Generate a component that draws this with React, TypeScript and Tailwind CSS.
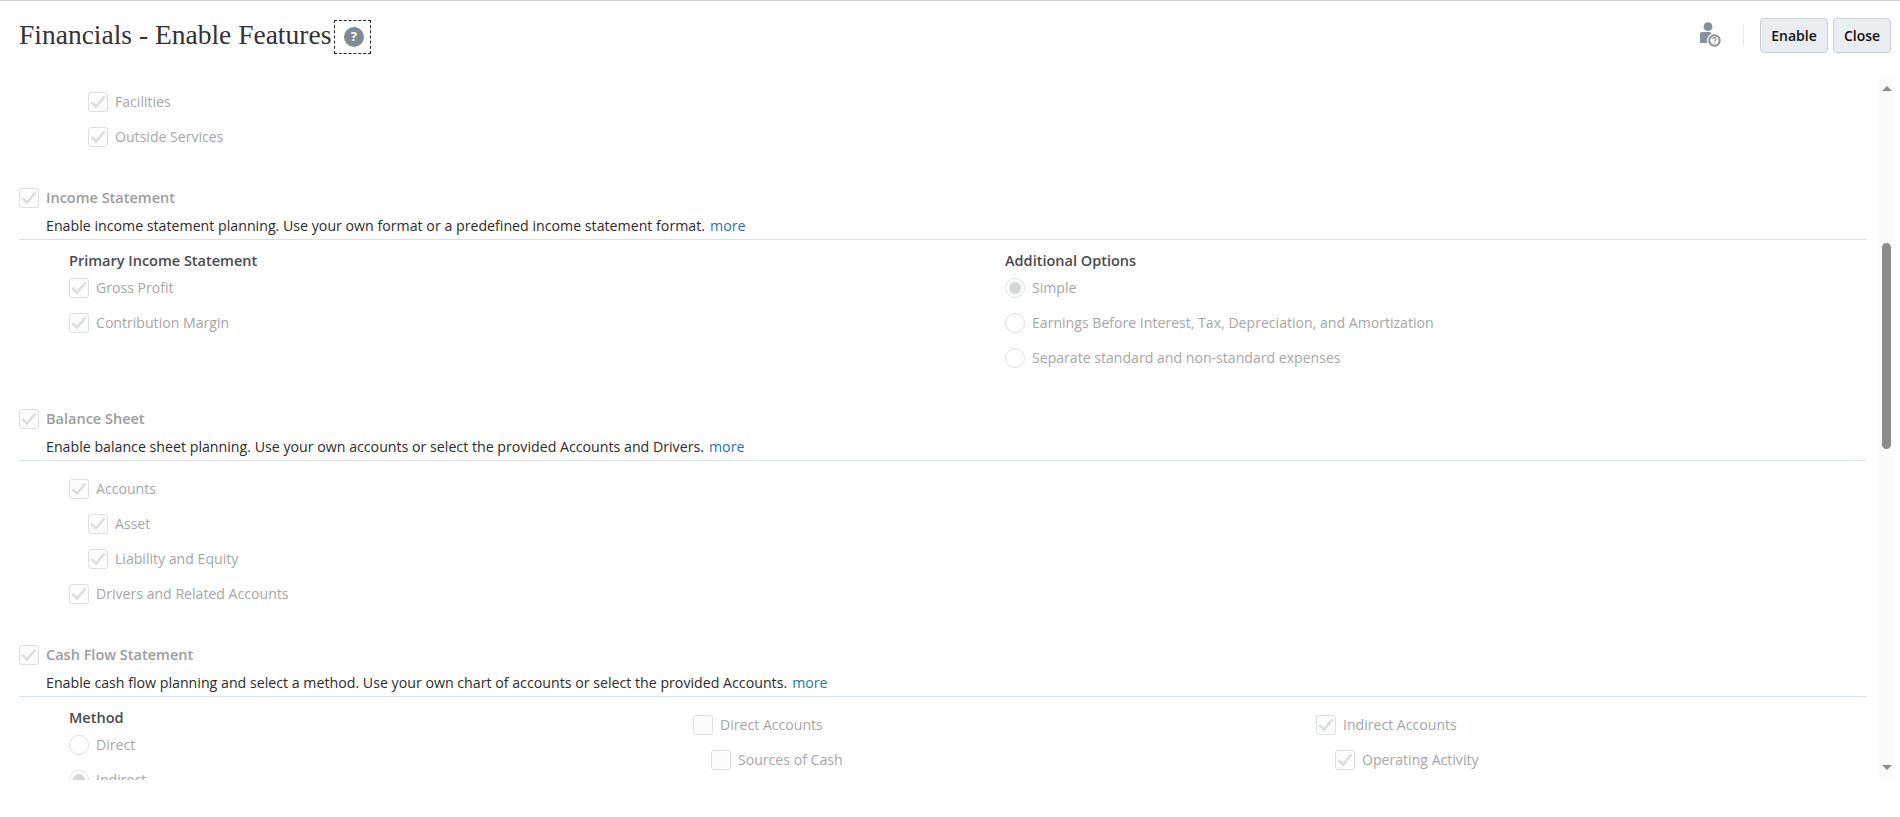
import React from "react";

function Check({ label, checked = true, bold = false }: { label: string; checked?: boolean; bold?: boolean }) {
  return (
    <div className="flex h-[35px] items-center">
      <span className="flex h-[20px] w-[20px] items-center justify-center rounded-[3px] border border-[#dcdfe1] bg-[#fcfcfc]">
        {checked && (
          <svg width="18" height="18" viewBox="0 0 18 18" fill="none">
            <path d="M2.5 9 L7 13.5 L15.5 3.5" stroke="#dcdee0" strokeWidth="2.6" />
          </svg>
        )}
      </span>
      <span className={bold ? "ml-[7px] text-[14.5px] font-semibold text-[#9c9c9c]" : "ml-[7px] text-[14.1px] text-[#a6a6a6]"}>{label}</span>
    </div>
  );
}

function Radio({ label, checked = false }: { label: string; checked?: boolean }) {
  return (
    <div className="flex h-[35px] items-center">
      <span className="flex h-[20px] w-[20px] items-center justify-center rounded-full border border-[#dcdfe1] bg-white">
        {checked && <span className="h-[12px] w-[12px] rounded-full bg-[#d4d6d8]" />}
      </span>
      <span className="ml-[7px] text-[14.1px] text-[#a6a6a6]">{label}</span>
    </div>
  );
}

function SectionHead({ title, text }: { title: string; text: string }) {
  return (
    <div className="border-b border-[#d9e1e7] pb-[3px]">
      <Check label={title} bold />
      <div className="ml-[27px] flex h-[21px] items-center text-[14.2px] text-[#2b2b2b]">
        <span>{text}</span>
        <a className="ml-[5px] text-[#1a74b5]">more</a>
      </div>
    </div>
  );
}

function Sub({ children }: { children: React.ReactNode }) {
  return <div className="text-[14.5px] font-semibold leading-[19px] text-[#4a4a4a]">{children}</div>;
}

export default function App() {
  return (
    <div className="flex h-[817px] w-[1900px] flex-col overflow-hidden border-t border-[#d0d3d5] bg-white font-['Open_Sans','Noto_Sans',sans-serif]">
      <header className="flex h-[63px] shrink-0 items-center pl-[19px] pr-[9px] pt-[5px]">
        <h1 className="font-['Liberation_Serif',serif] text-[27.5px] leading-none text-[#333333]">Financials - Enable Features</h1>
        <span className="ml-[3px] mt-[4px] flex h-[34px] w-[37px] items-center justify-center border border-dashed border-[#222222] pl-[2px]">
          <span className="flex h-[20px] w-[20px] items-center justify-center rounded-full bg-[#7f8a93] text-[13px] font-bold text-white">?</span>
        </span>
        <div className="ml-auto flex items-center">
          <svg width="21" height="26" viewBox="0 0 21 26">
            <circle cx="8" cy="4.7" r="4.4" fill="#8a9097" />
            <path d="M0 11.5 Q0 10 2 10 L10 10 Q11.5 10 11.5 12 L11.5 21 L0 21 Z" fill="#8a9097" />
            <circle cx="14.5" cy="18.5" r="7.6" fill="#ffffff" />
            <circle cx="14.5" cy="18.5" r="5.2" fill="none" stroke="#8a9097" strokeWidth="2" />
            <path d="M12.8 17 Q13 15.6 14.6 15.6 Q16.2 15.8 16.1 17.2 Q16 18 14.7 18.8 L14.7 19.6 M14.7 20.4 L14.7 21.4" fill="none" stroke="#8a9097" strokeWidth="1.2" />
          </svg>
          <span className="ml-[22px] h-[22px] w-[1px] bg-[#e4e8eb]" />
          <button className="ml-[16px] h-[35px] w-[68px] rounded-[4px] border border-[#c6d1d9] bg-[#e9edef] text-[14px] font-semibold text-[#111111]">Enable</button>
          <button className="ml-[5px] h-[35px] w-[58px] rounded-[4px] border border-[#c6d1d9] bg-[#e9edef] text-[14px] font-semibold text-[#111111]">Close</button>
        </div>
      </header>

      <div className="flex h-[716px] shrink-0">
        <main className="h-full w-[1866px] shrink-0 overflow-hidden pl-[19px] pt-[20px]">
          <div className="ml-[69px]">
            <Check label="Facilities" />
            <Check label="Outside Services" />
          </div>

          <section className="mt-[26px]">
            <SectionHead title="Income Statement" text="Enable income statement planning. Use your own format or a predefined income statement format." />
            <div className="ml-[50px] mt-[11px] grid grid-cols-[936px_1fr]">
              <div>
                <Sub>Primary Income Statement</Sub>
                <Check label="Gross Profit" />
                <Check label="Contribution Margin" />
              </div>
              <div>
                <Sub>Additional Options</Sub>
                <Radio label="Simple" checked />
                <Radio label="Earnings Before Interest, Tax, Depreciation, and Amortization" />
                <Radio label="Separate standard and non-standard expenses" />
              </div>
            </div>
          </section>

          <section className="mt-[26px]">
            <SectionHead title="Balance Sheet" text="Enable balance sheet planning. Use your own accounts or select the provided Accounts and Drivers." />
            <div className="ml-[50px] mt-[10px]">
              <Check label="Accounts" />
              <div className="ml-[19px]">
                <Check label="Asset" />
                <Check label="Liability and Equity" />
              </div>
              <Check label="Drivers and Related Accounts" />
            </div>
          </section>

          <section className="mt-[26px]">
            <SectionHead title="Cash Flow Statement" text="Enable cash flow planning and select a method. Use your own chart of accounts or select the provided Accounts." />
            <div className="ml-[50px] mt-[10px] grid grid-cols-[624px_623px_1fr]">
              <div className="pt-[1px]">
                <Sub>Method</Sub>
                <Radio label="Direct" />
                <Radio label="Indirect" checked />
              </div>
              <div>
                <Check label="Direct Accounts" checked={false} />
                <div className="ml-[18px]">
                  <Check label="Sources of Cash" checked={false} />
                </div>
              </div>
              <div>
                <Check label="Indirect Accounts" />
                <div className="ml-[19px]">
                  <Check label="Operating Activity" />
                </div>
              </div>
            </div>
          </section>
        </main>

        <div className="ml-[13px] mt-[12px] flex h-[704px] w-[15px] flex-col items-center bg-[#fbfbfb]">
          <span className="mt-[10px] h-0 w-0 border-x-[5px] border-b-[5px] border-x-transparent border-b-[#8c8c8c]" />
          <span className="mt-[152px] h-[206px] w-[9px] shrink-0 rounded-full bg-[#8c8c8c]" />
          <span className="mt-[316px] h-0 w-0 border-x-[5px] border-t-[5px] border-x-transparent border-t-[#8c8c8c]" />
        </div>
      </div>
    </div>
  );
}
